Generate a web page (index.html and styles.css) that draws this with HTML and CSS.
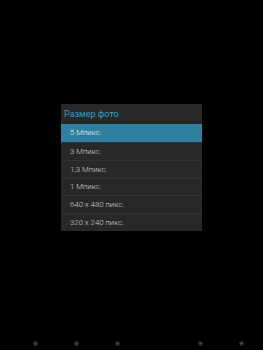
FILE: index.html
```html
<!DOCTYPE html>
<html lang="ru">
<head>
<meta charset="utf-8">
<link rel="stylesheet" href="styles.css">
</head>
<body>
<div class="screen">
  <div class="dialog">
    <div class="title">Размер фото</div>
    <ul class="list">
      <li class="item selected">5 Мпикс.</li>
      <li class="item">3 Мпикс.</li>
      <li class="item">1,3 Мпикс.</li>
      <li class="item">1 Мпикс.</li>
      <li class="item">640 x 480 пикс.</li>
      <li class="item">320 x 240 пикс.</li>
    </ul>
  </div>
  <div class="nav">
    <span class="dot"></span>
    <span class="dot"></span>
    <span class="dot"></span>
    <span class="gap"></span>
    <span class="dot"></span>
    <span class="dot"></span>
  </div>
</div>
</body>
</html>
```
FILE: styles.css
```css
html, body {
  margin: 0;
  padding: 0;
  background: #000;
}
.screen {
  width: 263px;
  height: 350px;
  display: flex;
  flex-direction: column;
  font-family: Roboto, "Liberation Sans", sans-serif;
}
.dialog {
  margin: 104px 0 0 61px;
  width: 141px;
  background: #282828;
}
.title {
  height: 20px;
  line-height: 20px;
  padding-left: 3px;
  font-size: 9px;
  color: #2e9fcc;
}
.list {
  list-style: none;
  margin: 0;
  padding: 0;
  display: grid;
  grid-template-rows: repeat(6, 1fr);
  height: 107px;
}
.item {
  display: flex;
  align-items: center;
  padding-left: 9px;
  font-size: 7.8px;
  font-weight: 300;
  color: #d2d2d2;
  border-top: 1px solid #333333;
}
.item:first-child {
  border-top: none;
}
.item.selected {
  background: #2f809f;
  color: #f2f2f2;
}
.nav {
  margin-top: auto;
  height: 9px;
  display: flex;
  align-items: flex-start;
  padding-left: 33px;
  gap: 36px;
}
.dot {
  width: 5px;
  height: 5px;
  border-radius: 50%;
  background: radial-gradient(circle, #4a4a4a 0%, #2a2a2a 50%, rgba(0,0,0,0) 100%);
}
.gap {
  width: 42px;
  height: 4px;
  margin-left: -36px;
}
```
